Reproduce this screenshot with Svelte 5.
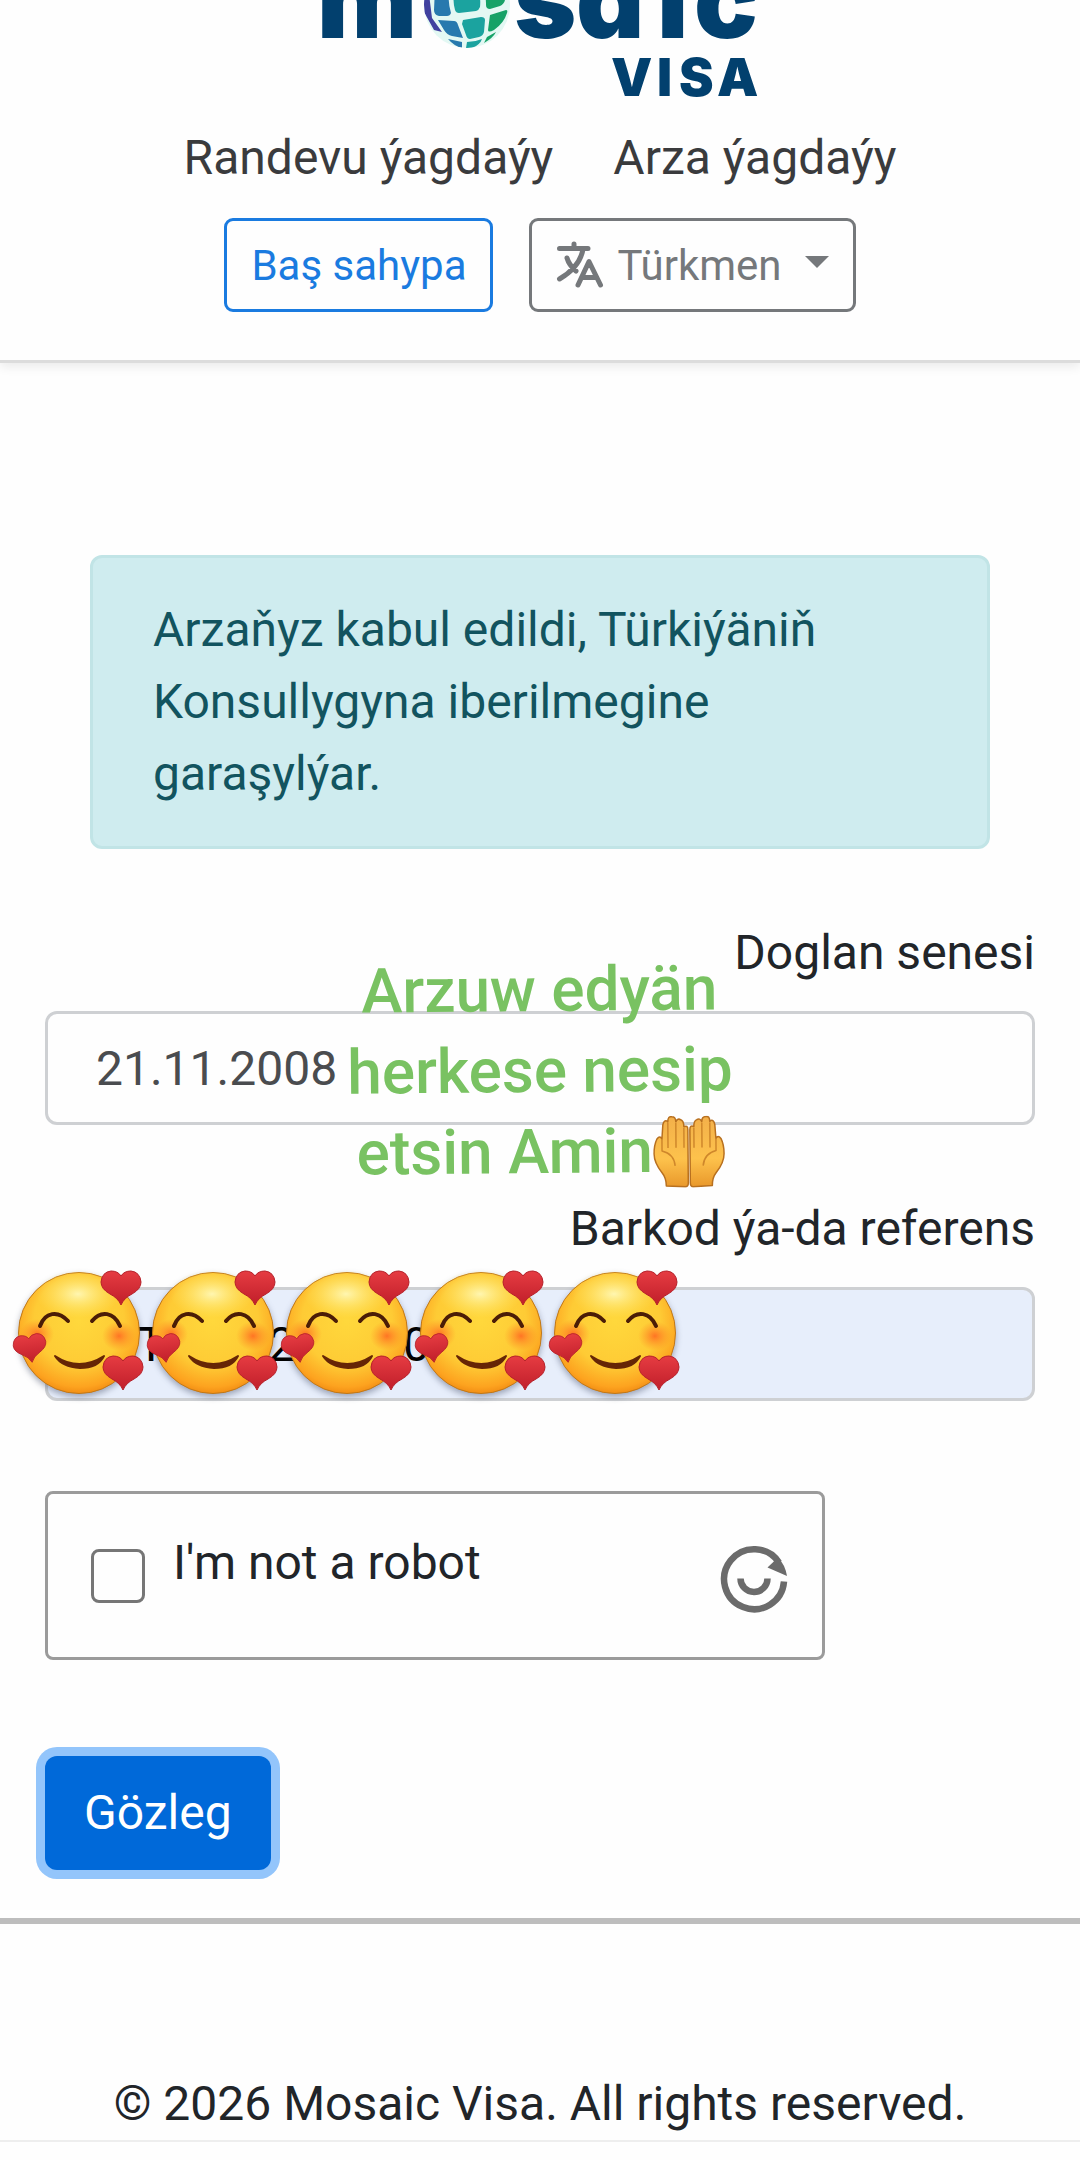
<script lang="ts">
  let birthDate = '21.11.2008';
  let reference = 'IRTNNN202600';
  let robot = false;

  const stickers = [0, 1, 2, 3, 4];
</script>

<svelte:head>
  <title>Mosaic Visa</title>
</svelte:head>

<header>
  <a class="logo" href="#home" aria-label="Mosaic Visa">
    <svg width="440" height="100" viewBox="0 0 440 100">
      <defs>
        <clipPath id="globe"><circle cx="147" cy="5" r="43" /></clipPath>
      </defs>
      <text class="logo-name" y="38" x="-3 194 256 337 374">msaic</text>
      <text class="logo-sub" y="96" x="291 337 359 397">VISA</text>
      <g clip-path="url(#globe)">
        <rect x="104" y="-38" width="86" height="86" fill="#e3f8f3" />
        <path d="M104-6h5l3 24 10 14-8-2-10-18z" fill="#41419f" />
        <path d="M115-12h15q-3 12 1 25-1 3-4 3h-8q-5-1-5-6z" fill="#2779ae" />
        <path d="M135-12h23q3 10 2 19-1 3-4 4l-17 2q-3 0-4-3-3-11 0-22z" fill="#1ba39f" />
        <path d="M164-12h18q5 8 3 12-1 4-5 6l-10 3q-4 0-4-4 0-8-2-17z" fill="#16a267" />
        <path d="M118 20l16 1q3 0 4 4l5 13-11-2q-5-1-8-6z" fill="#2779ae" />
        <path d="M143 20l18-3q4 0 4 3l-1 12q-1 4-5 5l-9 2q-3 0-4-4l-4-11z" fill="#1ba39f" />
        <path d="M170 15l16-5q2 0 1 3-3 10-13 17-6 3-6 0z" fill="#16a267" />
        <path d="M128 39l14 3v6q-8-2-14-9z" fill="#2779ae" />
        <path d="M147 42q8 0 15-3-2 6-10 9h-6z" fill="#1ba39f" />
        <path d="M167 37l9-5q-3 6-12 11z" fill="#16a267" />
      </g>
    </svg>
  </a>
  <nav>
    <a href="#appointment">Randevu ýagdaýy</a>
    <a href="#application">Arza ýagdaýy</a>
  </nav>
  <div class="actions">
    <button class="btn home" type="button">Baş sahypa</button>
    <button class="btn lang" type="button">
      <svg width="48" height="48" viewBox="9 13 48 48" aria-hidden="true">
        <path d="M12.500 20.500H41M27 16v4M36 21Q33 39 12.500 51M20 30Q22 37 29 43M31 57L42 33.500 53.500 57M34.500 49.500h15" />
      </svg>
      Türkmen
      <span class="caret"></span>
    </button>
  </div>
</header>

<main>
  <div class="alert" role="alert">
    Arzaňyz kabul edildi, Türkiýäniň Konsullygyna iberilmegine garaşylýar.
  </div>

  <form on:submit|preventDefault>
    <div class="field">
      <label for="birth">Doglan senesi</label>
      <div class="control">
        <input id="birth" type="text" bind:value={birthDate} />
        <p class="caption">
          Arzuw edyän<br />herkese nesip<br />etsin Amin<svg width="72" height="72" viewBox="0 0 72 72" aria-hidden="true">
            <defs>
              <linearGradient id="palm" x1="0" y1="0" x2="0" y2="1">
                <stop offset="0" stop-color="#f3b04a" />
                <stop offset="0.6" stop-color="#fdc24c" />
                <stop offset="1" stop-color="#e9982b" />
              </linearGradient>
              <g id="hand" fill="url(#palm)" stroke="#b8701f" stroke-width="1.500" stroke-linejoin="round">
                <path d="M13 70Q13 62 9 57 1 47 1 38 1 29 4 23q3-4 5 0L10 9q1-5 4-4l1 1q0-6 4-5 4 0 4 5 2-4 5-2 3 1 3 7 4-2 4 3v53q0 4-3 4z" />
                <path d="M15 7v25M23 7v25M31 12v20M9 23v12q12 3 13 15" fill="none" stroke="#cf872b" />
              </g>
            </defs>
            <use href="#hand" />
            <use href="#hand" transform="matrix(-1 0 0 1 72 0)" />
          </svg>
        </p>
      </div>
    </div>

    <div class="field">
      <label for="reference">Barkod ýa-da referens</label>
      <div class="control">
        <input id="reference" class="filled" type="text" bind:value={reference} />
        <div class="stickers" aria-hidden="true">
          {#each stickers as sticker (sticker)}
            <svg width="134" height="134" viewBox="0 0 134 134">
              <defs>
                <radialGradient id="face{sticker}" cx="0.5" cy="0.4" r="0.62">
                  <stop offset="0" stop-color="#ffd83c" />
                  <stop offset="0.6" stop-color="#fecb35" />
                  <stop offset="0.88" stop-color="#fda31f" />
                  <stop offset="1" stop-color="#ee8610" />
                </radialGradient>
                <radialGradient id="shine{sticker}">
                  <stop offset="0" stop-color="#fff6b0" />
                  <stop offset="1" stop-color="#ffe766" stop-opacity="0" />
                </radialGradient>
                <radialGradient id="blush{sticker}">
                  <stop offset="0" stop-color="#ff6b22" stop-opacity="0.9" />
                  <stop offset="1" stop-color="#ff8a22" stop-opacity="0" />
                </radialGradient>
                <linearGradient id="love{sticker}" x1="0" y1="0" x2="0" y2="1">
                  <stop offset="0" stop-color="#e63c42" />
                  <stop offset="1" stop-color="#c01e2a" />
                </linearGradient>
                <path id="heart{sticker}" d="M20 34Q17 27 9 23 0 18 0 11 1 1 10 0q7 0 10 5Q23 0 30 0q9 1 10 11 0 7-9 12-8 4-11 11z" />
              </defs>
              <circle class="face" cx="67" cy="67" r="60.500" fill="url(#face{sticker})" stroke="#c07819" />
              <ellipse cx="66" cy="28" rx="42" ry="24" fill="url(#shine{sticker})" />
              <ellipse cx="25" cy="68" rx="17" ry="15" fill="url(#blush{sticker})" />
              <ellipse cx="107" cy="70" rx="17" ry="15" fill="url(#blush{sticker})" />
              <path d="M28 60C33 46 46 44 56 55M80 55C89 44 102 46 108 60" fill="none" stroke="#4b1d07" stroke-width="4" stroke-linecap="round" />
              <path d="M43 90q24 16 49 0-6 12-24 12-18-1-25-12z" fill="#662606" stroke="#662606" stroke-width="2" stroke-linejoin="round" />
              <g fill="url(#love{sticker})" stroke="#b52029">
                <use href="#heart{sticker}" transform="translate(89 5)" />
                <use href="#heart{sticker}" transform="translate(91 90)" />
                <use href="#heart{sticker}" transform="translate(0 71) rotate(-8) scale(0.82)" />
              </g>
            </svg>
          {/each}
        </div>
      </div>
    </div>

    <div class="captcha">
      <label>
        <input type="checkbox" bind:checked={robot} />
        <span>I'm not a robot</span>
      </label>
      <svg width="68" height="68" viewBox="11 10.500 68 68" aria-hidden="true">
        <path class="ring" d="M70 28A30 30 0 1 0 75 47" />
        <path class="ring" d="M31.500 44a13.500 13.500 0 0 0 27 0" />
        <path d="M58.500 33L69 23Q76 30 78 41.500z" fill="#6b6b6b" />
      </svg>
    </div>

    <button class="submit" type="submit">Gözleg</button>
  </form>
</main>

<footer>© 2026 Mosaic Visa. All rights reserved.</footer>

<style>
  :global(body) {
    background: #fefefe;
    overflow-x: hidden;
  }
  :global(#app) {
    color: #212529;
    font-family: Roboto, sans-serif;
    font-size: 48px;
    line-height: 72px;
  }

  header {
    display: flex;
    flex-direction: column;
    align-items: center;
    padding-bottom: 48px;
    border-bottom: 3px solid #dcdcdc;
    box-shadow: 0 4px 10px rgba(0, 0, 0, 0.08);
  }
  .logo {
    display: block;
    height: 122px;
  }
  .logo svg {
    display: block;
  }
  .logo text {
    fill: #02406e;
    font-family: Inter, sans-serif;
    font-weight: 900;
    font-feature-settings: "cv11";
  }
  .logo-name {
    font-size: 106px;
  }
  .logo-sub {
    font-size: 52px;
  }
  nav {
    display: flex;
    gap: 60px;
  }
  nav a {
    color: #3a3b3d;
    text-decoration: none;
  }
  .actions {
    display: flex;
    gap: 36px;
    margin-top: 24px;
  }
  .btn {
    display: flex;
    align-items: center;
    height: 94px;
    padding: 0 24px;
    border: 3px solid;
    border-radius: 9px;
    background: none;
    font-family: inherit;
    font-size: 42px;
  }
  .home {
    color: #1a7be0;
  }
  .lang {
    gap: 13px;
    color: #75787b;
  }
  .lang path {
    fill: none;
    stroke: #75787b;
    stroke-width: 5;
    stroke-linecap: round;
    stroke-linejoin: round;
  }
  .caret {
    margin: 0 0 6px 10px;
    border: 12px solid transparent;
    border-top-color: #75787b;
    border-bottom: 0;
  }

  main {
    padding: 192px 45px 48px;
    border-bottom: 6px solid #bdbdbd;
  }
  .alert {
    margin: 0 45px 68px;
    padding: 36px 60px;
    border: 3px solid #c1e4e6;
    border-radius: 12px;
    background: #cfecef;
    color: #12545f;
  }
  .field {
    display: flex;
    flex-direction: column;
    gap: 22px;
    margin-bottom: 68px;
  }
  .field label {
    text-align: right;
  }
  .control {
    position: relative;
  }
  .control input {
    display: block;
    box-sizing: border-box;
    width: 100%;
    height: 114px;
    padding: 0 48px;
    border: 3px solid #ced0d3;
    border-radius: 12px;
    background: #fefefe;
    color: #4a4c4f;
    font: inherit;
  }
  .control .filled {
    background: #e7eefb;
    color: #000;
  }
  .caption {
    position: absolute;
    top: -62px;
    left: 50%;
    z-index: 1;
    margin: 0;
    color: #79c262;
    font-size: 62px;
    font-weight: 500;
    line-height: 81px;
    text-align: center;
    white-space: nowrap;
    transform: translateX(-50%) rotate(-0.5deg);
  }
  .caption svg {
    vertical-align: -16px;
  }
  .stickers {
    position: absolute;
    top: -21px;
    left: -33px;
    display: flex;
  }
  .stickers svg {
    overflow: visible;
  }
  .face {
    filter: drop-shadow(0 3px 3px rgba(40, 50, 80, 0.4));
  }

  .captcha {
    display: flex;
    align-items: center;
    justify-content: space-between;
    box-sizing: border-box;
    max-width: 780px;
    height: 169px;
    margin-top: 90px;
    padding: 0 34px 0 43px;
    border: 3px solid #9b9b9b;
    border-radius: 8px;
  }
  .captcha svg {
    margin-top: 6px;
  }
  .captcha label {
    display: flex;
    align-items: center;
    gap: 28px;
  }
  .captcha input {
    appearance: none;
    width: 54px;
    height: 54px;
    margin: 0;
    border: 3px solid #767676;
    border-radius: 8px;
  }
  .captcha span {
    padding-bottom: 26px;
  }
  .ring {
    fill: none;
    stroke: #6b6b6b;
    stroke-width: 6.5;
  }
  .submit {
    display: block;
    height: 114px;
    margin-top: 96px;
    padding: 0 39px;
    border: 0;
    border-radius: 12px;
    background: #0069d9;
    box-shadow: 0 0 0 9px #93c5fb;
    color: #fff;
    font: inherit;
  }

  footer {
    padding-top: 144px;
    border-bottom: 2px solid #eee;
    text-align: center;
  }
</style>
